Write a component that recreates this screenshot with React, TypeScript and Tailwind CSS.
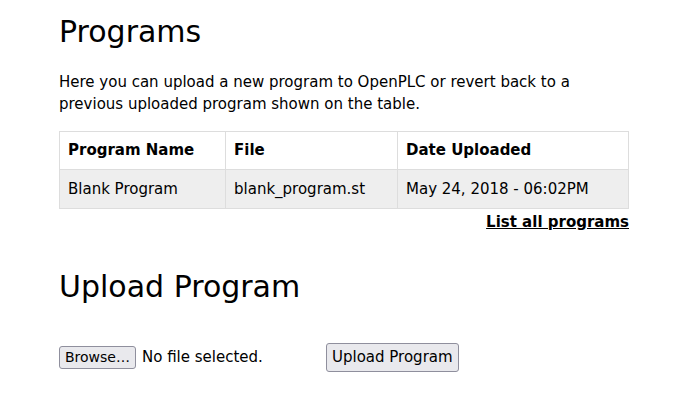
import React from "react";

const App: React.FC = () => {
  return (
    <div className="min-h-[415px] bg-white text-black" style={{ fontFamily: '"DejaVu Sans", sans-serif' }}>
      <div className="w-[570px] ml-[59px] pt-[10px]">
        <h2 className="text-[30px] leading-[44px] font-normal">Programs</h2>
        <p className="mt-[17px] text-[15px] leading-[22px]">
          Here you can upload a new program to OpenPLC or revert back to a previous uploaded program shown on the table.
        </p>
        <table className="mt-[16px] w-full border-collapse text-[15px]">
          <thead>
            <tr>
              <th className="w-[166px] h-[38px] border border-[#ddd] px-2 text-left font-bold">Program Name</th>
              <th className="w-[172px] border border-[#ddd] px-2 text-left font-bold">File</th>
              <th className="border border-[#ddd] px-2 text-left font-bold">Date Uploaded</th>
            </tr>
          </thead>
          <tbody>
            <tr className="bg-[#eee]">
              <td className="h-[39px] border border-[#ddd] px-2">Blank Program</td>
              <td className="border border-[#ddd] px-2">blank_program.st</td>
              <td className="border border-[#ddd] px-2">May 24, 2018 - 06:02PM</td>
            </tr>
          </tbody>
        </table>
        <div className="flex justify-end">
          <a href="#" className="pt-[1px] text-[15px] leading-[24px] font-bold underline text-black">List all programs</a>
        </div>
        <h2 className="mt-[31px] text-[30px] leading-[44px] font-normal">Upload Program</h2>
        <div className="mt-[34px] flex items-center">
          <button className="h-[23px] px-[5px] text-[14px] bg-[#e9e9ed] border border-[#8f8f9d] rounded-[3px]">Browse…</button>
          <span className="ml-[6px] text-[15px] w-[184px]">No file selected.</span>
          <button className="h-[29px] px-[5px] text-[15px] bg-[#e9e9ed] border border-[#8f8f9d] rounded-[3px]">Upload Program</button>
        </div>
      </div>
    </div>
  );
};

export default App;
